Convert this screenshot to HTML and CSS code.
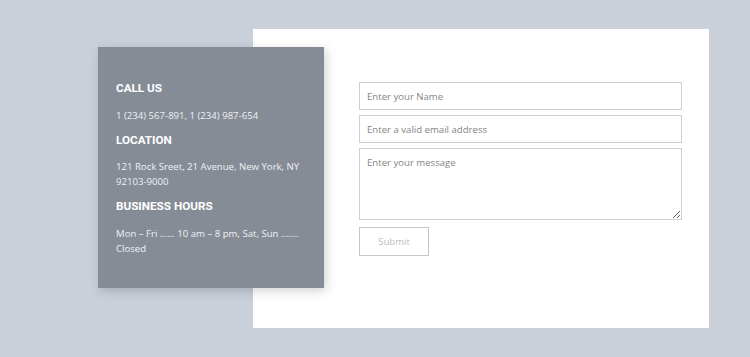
FILE: index.html
```html
<!DOCTYPE html>
<html lang="en">
<head>
<meta charset="UTF-8" />
<meta name="viewport" content="width=device-width, initial-scale=1" />
<title>Contact</title>
<link rel="stylesheet" href="styles.css">
</head>
<body>

<section class="contact">
  <div class="info">
    <h3>CALL US</h3>
    <p>1 (234) 567-891, 1 (234) 987-654</p>
    <h3>LOCATION</h3>
    <p>121 Rock Sreet, 21 Avenue, New York, NY 92103-9000</p>
    <h3>BUSINESS HOURS</h3>
    <p>Mon – Fri …… 10 am – 8 pm, Sat, Sun ……. Closed</p>
  </div>

  <div class="card">
    <form class="form">
      <input type="text" placeholder="Enter your Name" />
      <input type="email" placeholder="Enter a valid email address" />
      <textarea placeholder="Enter your message"></textarea>
      <div><button type="submit">Submit</button></div>
    </form>
  </div>
</section>

</body>
</html>
```

FILE: styles.css
```css
body {
  margin: 0;
  background: #c9d0da;
  font-family: "Open Sans", Arial, sans-serif;
  min-height: 357px;
}
.contact {
  display: flex;
  align-items: flex-start;
  padding: 29px 0 0 98px;
}
.info {
  position: relative;
  z-index: 1;
  box-sizing: border-box;
  width: 226px;
  height: 241px;
  margin-top: 18px;
  margin-right: -71px;
  padding: 33px 18px 0 18px;
  background: #868c96;
  color: #eef0f3;
  box-shadow: 2px 3px 10px rgba(0, 0, 0, 0.18);
}
.info h3 {
  margin: 0 0 11.5px;
  font-family: Roboto, Arial, sans-serif;
  font-size: 11.7px;
  line-height: 16px;
  font-weight: bold;
  color: white;
}
.info p {
  margin: 0 0 9px;
  font-size: 9.6px;
  line-height: 15px;
}
.card {
  box-sizing: border-box;
  width: 456px;
  height: 299px;
  background: white;
  padding: 53px 27px 0 106px;
}
.form {
  display: flex;
  flex-direction: column;
  gap: 5px;
}
input, textarea {
  box-sizing: border-box;
  width: 100%;
  margin: 0;
  border: 1.5px solid #cfcfcf;
  padding: 0 7px;
  font-family: "Open Sans", Arial, sans-serif;
  font-size: 9.6px;
  color: #555;
  background: white;
  outline: none;
}
input {
  height: 28px;
}
textarea {
  height: 72px;
  padding-top: 7px;
  resize: vertical;
}
::placeholder {
  color: #858585;
}
button {
  margin-top: 2px;
  width: 70px;
  height: 29px;
  background: white;
  border: 1.5px solid #c4c8cd;
  font-family: "Open Sans", Arial, sans-serif;
  font-size: 9.6px;
  color: #b9bec4;
  cursor: pointer;
}
```
